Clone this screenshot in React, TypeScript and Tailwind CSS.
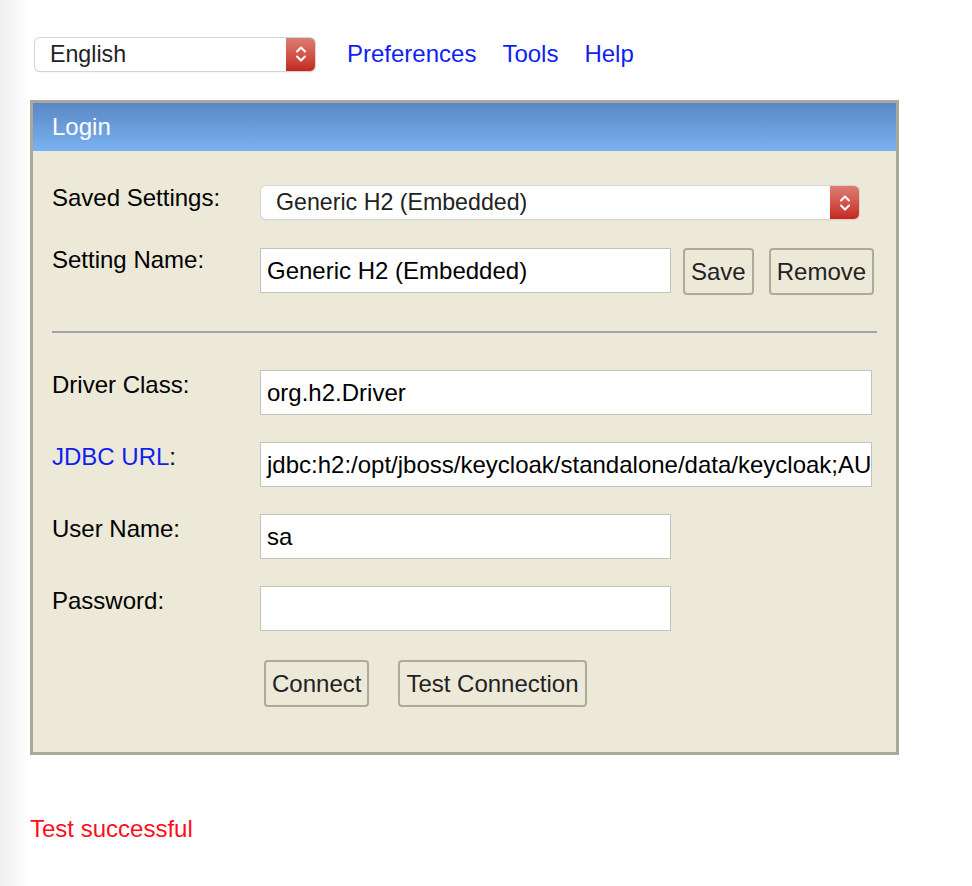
import type { ReactNode } from 'react'

const font = { fontFamily: '"Liberation Sans", Arial, sans-serif' }

function Chevrons() {
  return (
    <svg width="12" height="20" viewBox="0 0 12 20" fill="none" stroke="white" strokeWidth="2" strokeLinecap="round" strokeLinejoin="round">
      <path d="M2 7.5 L6 3.5 L10 7.5" />
      <path d="M2 12.5 L6 16.5 L10 12.5" />
    </svg>
  )
}

function FakeSelect({ value, className }: { value: string; className: string }) {
  return (
    <div className={`flex h-[33px] rounded-[5px] bg-white shadow-[0_0_0_1px_#d4d4d4,0_1px_1px_#b8b8b8] ${className}`}>
      <div className="flex-1 flex items-center pl-[15px] text-[23.2px] text-[#222] truncate">{value}</div>
      <div className="w-[29px] flex items-center justify-center rounded-r-[5px] bg-gradient-to-b from-[#dc7c75] to-[#c4241c]">
        <Chevrons />
      </div>
    </div>
  )
}

function TextBox({ value = '', className }: { value?: string; className: string }) {
  return (
    <div className={`h-[45px] bg-white border border-[#c3c2bb] flex items-center pl-[6px] text-[24px] text-black overflow-hidden whitespace-nowrap ${className}`}>
      {value}
    </div>
  )
}

function Btn({ children }: { children: ReactNode }) {
  return (
    <button className="h-[47px] px-[6px] rounded-[4px] border-2 border-[#aeab9d] bg-[#ece9d8] text-[24px] text-[#222]">
      {children}
    </button>
  )
}

function Row({ label, children, low = false }: { label: ReactNode; children: ReactNode; low?: boolean }) {
  return (
    <div className="flex items-start">
      <div className={`w-[208px] shrink-0 text-[24px] leading-[27px] text-black ${low ? 'mt-[1px]' : '-mt-[2px]'}`}>{label}</div>
      {children}
    </div>
  )
}

export default function App() {
  return (
    <div className="flex min-h-[886px] bg-white" style={font}>
      <div className="w-[30px] shrink-0 bg-gradient-to-r from-[#efefef] to-white" />
      <div className="flex flex-col">
        <div className="flex items-center pt-[36px] pl-[5px]">
          <FakeSelect value="English" className="w-[280px]" />
          <nav className="flex items-center gap-[26px] ml-[32px] text-[24px] text-[#0f1ff2]">
            <a href="#">Preferences</a>
            <a href="#">Tools</a>
            <a href="#">Help</a>
          </nav>
        </div>

        <div className="mt-[28px] w-[869px] border-[3px] border-[#aca899] bg-[#ece9d8]">
          <div className="h-[48px] flex items-center pl-[19px] bg-gradient-to-b from-[#5a88c5] to-[#7ab2f1] text-white text-[24px]">
            Login
          </div>
          <div className="px-[19px] pt-[35px] pb-[45px]">
            <Row label="Saved Settings:">
              <div className="pl-[1px]">
                <FakeSelect value="Generic H2 (Embedded)" className="w-[598px]" />
              </div>
            </Row>
            <div className="mt-[29px]">
              <Row label="Setting Name:">
                <div className="flex gap-[12px]">
                  <TextBox value="Generic H2 (Embedded)" className="w-[411px]" />
                  <Btn>Save</Btn>
                  <div className="ml-[3px]">
                    <Btn>Remove</Btn>
                  </div>
                </div>
              </Row>
            </div>

            <div className="mt-[36px] h-[2px] bg-[#a0a3ab]" />

            <div className="mt-[37px] flex flex-col gap-[27px]">
              <Row low label="Driver Class:">
                <TextBox value="org.h2.Driver" className="w-[612px]" />
              </Row>
              <Row low label={<><span className="text-[#0f1ff2]">JDBC URL</span>:</>}>
                <TextBox value="jdbc:h2:/opt/jboss/keycloak/standalone/data/keycloak;AUTO_SERVER=TRUE" className="w-[612px]" />
              </Row>
              <Row low label="User Name:">
                <TextBox value="sa" className="w-[411px]" />
              </Row>
              <Row low label="Password:">
                <TextBox className="w-[411px]" />
              </Row>
            </div>

            <div className="mt-[29px] flex gap-[29px] pl-[212px]">
              <Btn>Connect</Btn>
              <Btn>Test Connection</Btn>
            </div>
          </div>
        </div>

        <p className="mt-[56px] text-[24px] text-[#ff0d1d]">Test successful</p>
      </div>
    </div>
  )
}
